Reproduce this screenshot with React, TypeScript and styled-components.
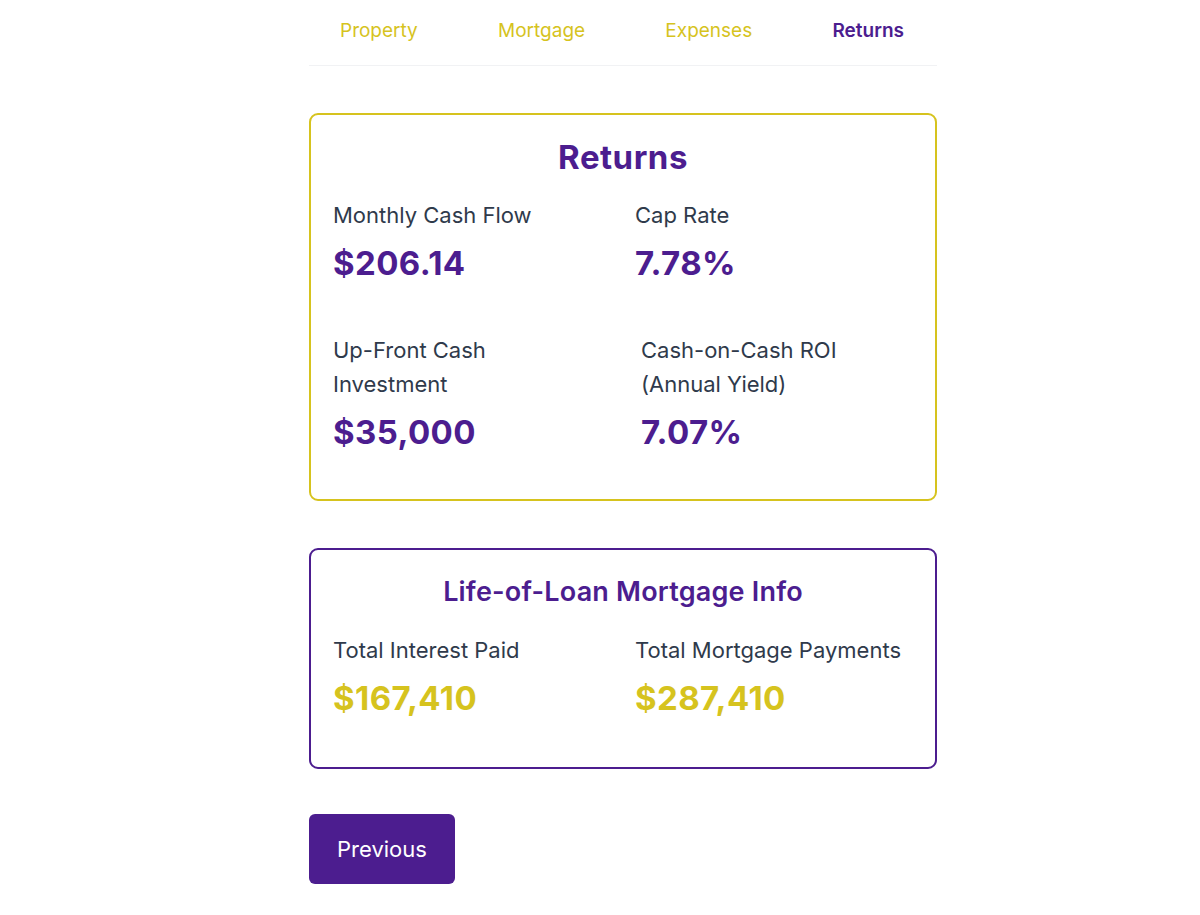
import React from "react";
import styled, { createGlobalStyle } from "styled-components";

const PURPLE = "#4c1d8f";
const YELLOW = "#d6c31e";
const TEXT = "#2f3a4b";

const Global = createGlobalStyle`
  html, body { margin: 0; padding: 0; background: #ffffff; }
  body { font-family: Inter, "Noto Sans", Arial, sans-serif; -webkit-font-smoothing: antialiased; }
  * { box-sizing: border-box; }
`;

const Page = styled.div`
  width: 674px;
  margin: 0 auto;
  padding-left: 46px;
`;

const Tabs = styled.nav`
  display: flex;
  justify-content: space-between;
  align-items: center;
  height: 66px;
  padding: 0 33px 5px 31px;
  border-bottom: 1px solid #f1f2f4;
`;

const Tab = styled.button<{ $active?: boolean }>`
  background: none;
  border: none;
  padding: 0;
  font-family: inherit;
  font-size: 19px;
  font-weight: ${(p) => (p.$active ? 600 : 400)};
  color: ${(p) => (p.$active ? PURPLE : YELLOW)};
  cursor: pointer;
`;

const Card = styled.section<{ $accent: string; $bottom: number }>`
  margin-top: 47px;
  border: 2px solid ${(p) => p.$accent};
  border-radius: 9px;
  padding: 24px 22px ${(p) => p.$bottom}px;
`;

const CardTitle = styled.h2<{ $size: number; $weight: number; $spacing: number }>`
  margin: 0 0 23px;
  text-align: center;
  color: ${PURPLE};
  font-size: ${(p) => p.$size}px;
  font-weight: ${(p) => p.$weight};
  line-height: 36px;
  letter-spacing: ${(p) => p.$spacing}px;
`;

const Grid = styled.div`
  display: grid;
  grid-template-columns: 1fr 1fr;
  column-gap: 24px;
  row-gap: 50px;
`;

const Stat = styled.div<{ $indent?: number }>`
  display: flex;
  flex-direction: column;
  gap: 11px;
  padding-left: ${(p) => p.$indent ?? 0}px;
`;

const Label = styled.div`
  font-size: 22px;
  line-height: 34px;
  color: ${TEXT};
  max-width: 200px;
`;

const WideLabel = styled(Label)`
  max-width: none;
  white-space: nowrap;
`;

const Value = styled.div<{ $color: string }>`
  font-size: 33px;
  line-height: 40px;
  font-weight: 700;
  color: ${(p) => p.$color};
  letter-spacing: 0.4px;
`;

const Button = styled.button`
  margin-top: 45px;
  width: 146px;
  height: 70px;
  border: none;
  border-radius: 6px;
  background: ${PURPLE};
  color: #ffffff;
  font-family: inherit;
  font-size: 22px;
  font-weight: 400;
  cursor: pointer;
`;

export default function App() {
  return (
    <>
      <Global />
      <Page>
        <Tabs>
          <Tab>Property</Tab>
          <Tab>Mortgage</Tab>
          <Tab>Expenses</Tab>
          <Tab $active>Returns</Tab>
        </Tabs>

        <Card $accent={YELLOW} $bottom={47}>
          <CardTitle $size={33} $weight={700} $spacing={0.5}>Returns</CardTitle>
          <Grid>
            <Stat>
              <WideLabel>Monthly Cash Flow</WideLabel>
              <Value $color={PURPLE}>$206.14</Value>
            </Stat>
            <Stat>
              <WideLabel>Cap Rate</WideLabel>
              <Value $color={PURPLE}>7.78%</Value>
            </Stat>
            <Stat>
              <Label>Up-Front Cash Investment</Label>
              <Value $color={PURPLE}>$35,000</Value>
            </Stat>
            <Stat $indent={6}>
              <Label>Cash-on-Cash ROI (Annual Yield)</Label>
              <Value $color={PURPLE}>7.07%</Value>
            </Stat>
          </Grid>
        </Card>

        <Card $accent={PURPLE} $bottom={49}>
          <CardTitle $size={27} $weight={600} $spacing={0.2}>Life-of-Loan Mortgage Info</CardTitle>
          <Grid>
            <Stat>
              <WideLabel>Total Interest Paid</WideLabel>
              <Value $color={YELLOW}>$167,410</Value>
            </Stat>
            <Stat>
              <WideLabel>Total Mortgage Payments</WideLabel>
              <Value $color={YELLOW}>$287,410</Value>
            </Stat>
          </Grid>
        </Card>

        <Button>Previous</Button>
      </Page>
    </>
  );
}
